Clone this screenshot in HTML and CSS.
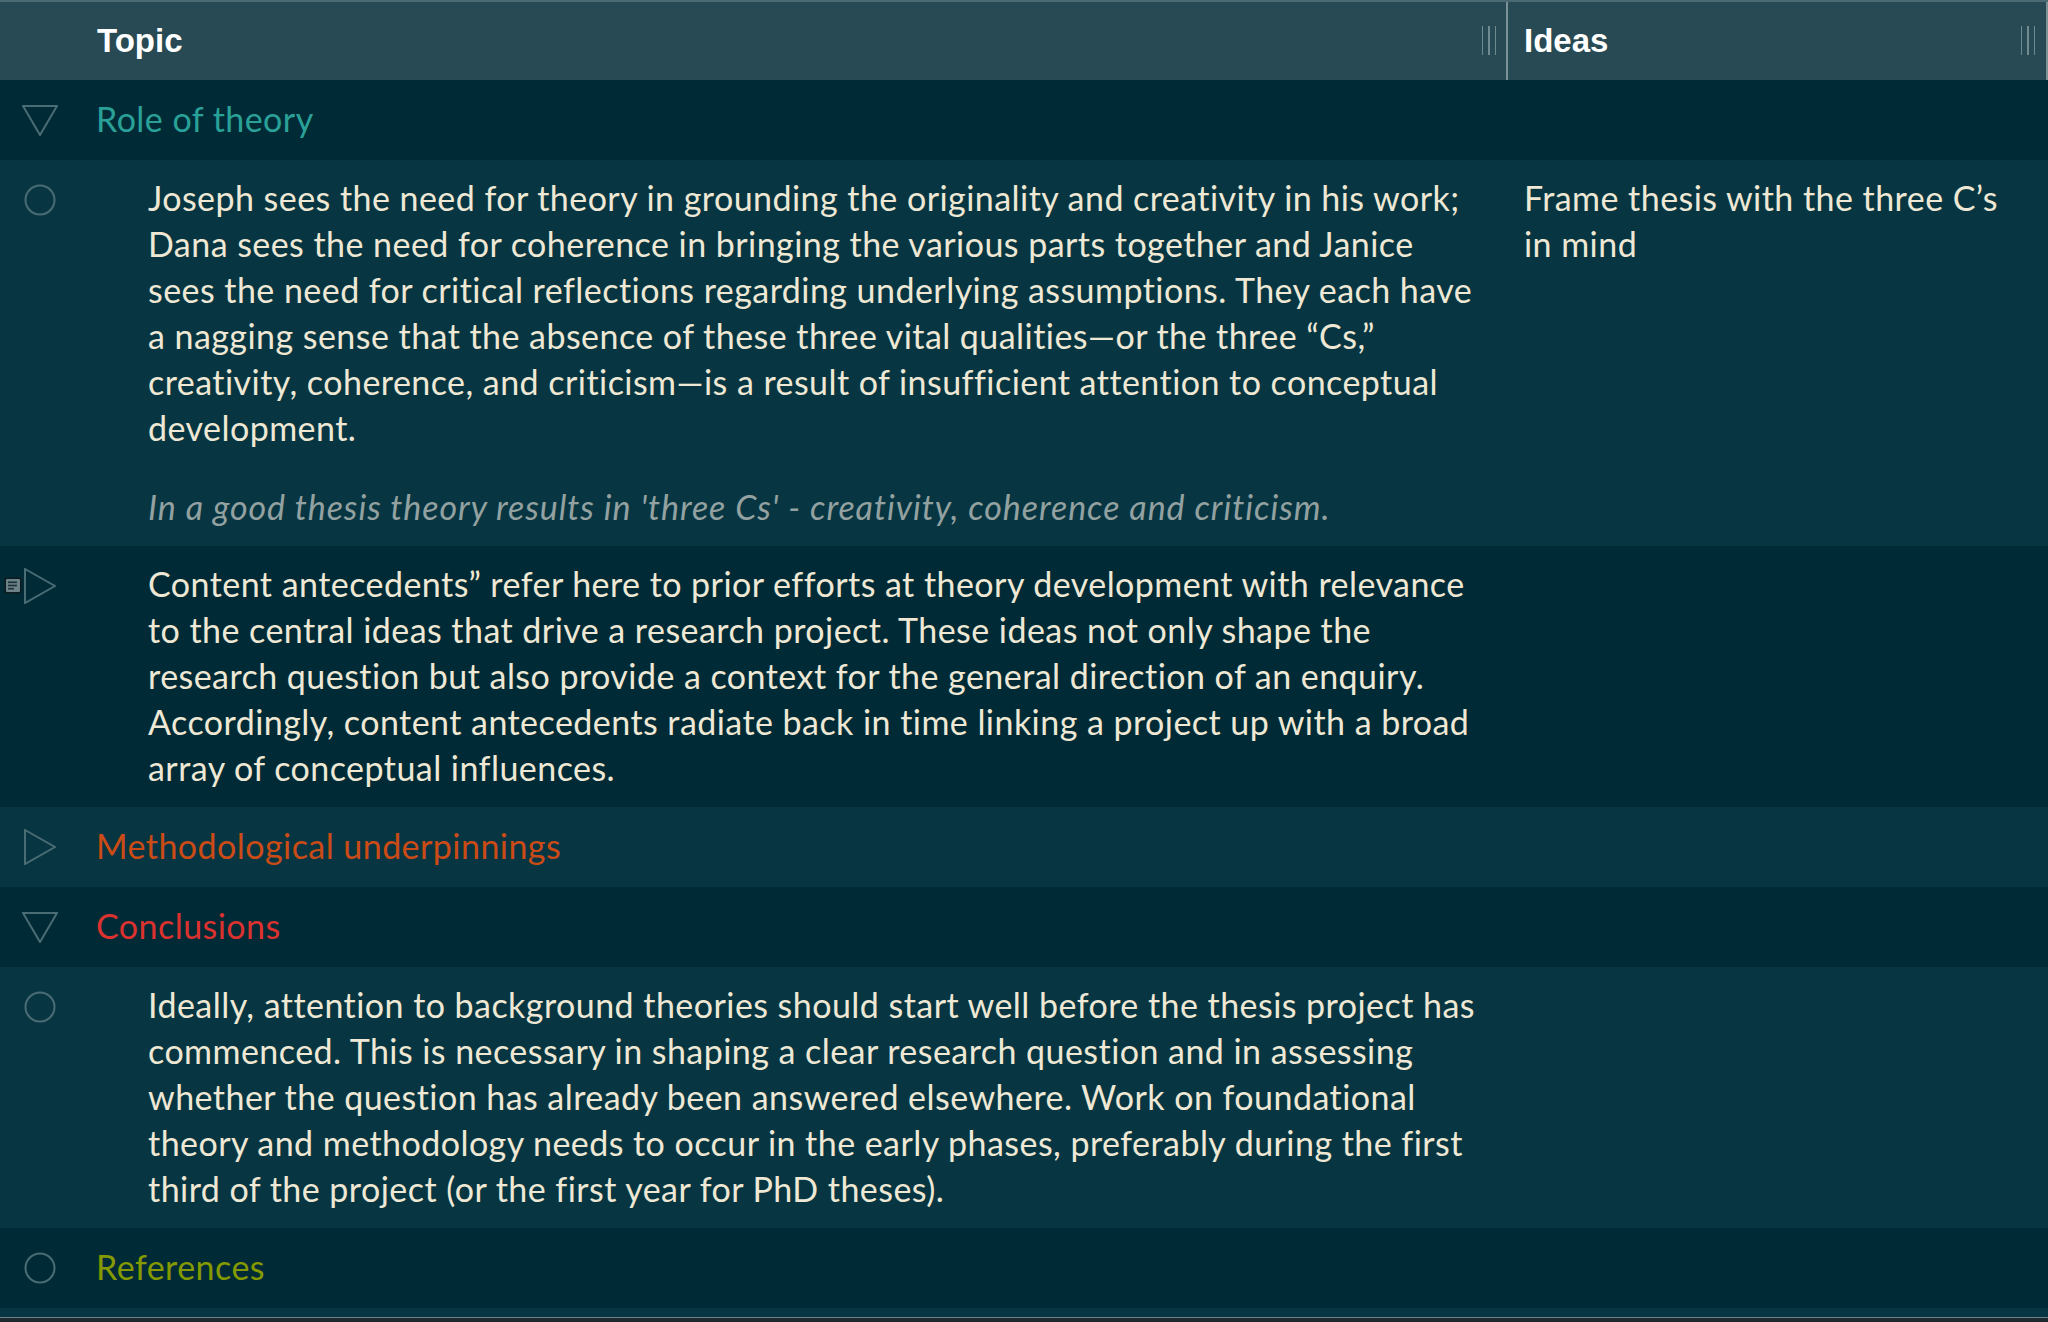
FILE: index.html
```html
<!DOCTYPE html>
<html lang="en">
<head>
<meta charset="utf-8">
<title>Outline</title>
<link rel="stylesheet" href="styles.css">
</head>
<body>
<div class="outline">
  <div class="header">
    <div class="hcell spacer"></div>
    <div class="hcell topic-h">
      <span class="htitle">Topic</span>
      <span class="grip"><i></i><i></i><i></i></span>
    </div>
    <div class="hcell ideas-h">
      <span class="htitle">Ideas</span>
      <span class="grip"><i></i><i></i><i></i></span>
    </div>
  </div>

  <div class="row title dark">
    <div class="icon"><svg class="tri-down" width="36" height="31" viewBox="0 0 36 31"><polygon points="1,1 35,1 18,30" /></svg></div>
    <div class="topic cyan">Role of theory</div>
    <div class="ideas"></div>
  </div>

  <div class="row note light">
    <div class="icon"><svg class="circle" width="32" height="32" viewBox="0 0 32 32"><circle cx="16" cy="16" r="14.5"/></svg></div>
    <div class="topic body">
      <p>Joseph sees the need for theory in grounding the originality and creativity in his work;<br>Dana sees the need for coherence in bringing the various parts together and Janice<br>sees the need for critical reflections regarding underlying assumptions. They each have<br>a nagging sense that the absence of these three vital qualities—or the three “Cs,”<br>creativity, coherence, and criticism—is a result of insufficient attention to conceptual<br>development.</p>
      <p class="annot">In a good thesis theory results in 'three Cs' - creativity, coherence and criticism.</p>
    </div>
    <div class="ideas body">Frame thesis with the three C’s<br>in mind</div>
  </div>

  <div class="row note dark">
    <div class="icon">
      <svg class="doc" width="18" height="17" viewBox="0 0 18 17"><rect x="0.5" y="0.5" width="17" height="16" rx="1.5" class="doc-bg"/><rect x="2" y="2" width="14" height="13" rx="1" class="doc-fill"/><rect x="4" y="4.5" width="9" height="1.6" class="doc-line"/><rect x="4" y="7.7" width="9" height="1.6" class="doc-line"/><rect x="4" y="10.9" width="6" height="1.6" class="doc-line"/></svg>
      <svg class="tri-right" width="32" height="36" viewBox="0 0 32 36"><polygon points="1,1 31,18 1,35" /></svg>
    </div>
    <div class="topic body">
      <p>Content antecedents” refer here to prior efforts at theory development with relevance<br>to the central ideas that drive a research project. These ideas not only shape the<br>research question but also provide a context for the general direction of an enquiry.<br>Accordingly, content antecedents radiate back in time linking a project up with a broad<br>array of conceptual influences.</p>
    </div>
    <div class="ideas"></div>
  </div>

  <div class="row title light">
    <div class="icon"><svg class="tri-right" width="32" height="36" viewBox="0 0 32 36"><polygon points="1,1 31,18 1,35" /></svg></div>
    <div class="topic orange">Methodological underpinnings</div>
    <div class="ideas"></div>
  </div>

  <div class="row title dark">
    <div class="icon"><svg class="tri-down" width="36" height="31" viewBox="0 0 36 31"><polygon points="1,1 35,1 18,30" /></svg></div>
    <div class="topic red">Conclusions</div>
    <div class="ideas"></div>
  </div>

  <div class="row note light">
    <div class="icon"><svg class="circle" width="32" height="32" viewBox="0 0 32 32"><circle cx="16" cy="16" r="14.5"/></svg></div>
    <div class="topic body">
      <p>Ideally, attention to background theories should start well before the thesis project has<br>commenced. This is necessary in shaping a clear research question and in assessing<br>whether the question has already been answered elsewhere. Work on foundational<br>theory and methodology needs to occur in the early phases, preferably during the first<br>third of the project (or the first year for PhD theses).</p>
    </div>
    <div class="ideas"></div>
  </div>

  <div class="row title dark">
    <div class="icon"><svg class="circle" width="32" height="32" viewBox="0 0 32 32"><circle cx="16" cy="16" r="14.5"/></svg></div>
    <div class="topic green">References</div>
    <div class="ideas"></div>
  </div>

  <div class="footer"></div>
</div>
</body>
</html>
```

FILE: styles.css
```css
html, body {
  margin: 0;
  padding: 0;
  background: #002b36;
}

.outline {
  width: 2048px;
  height: 1322px;
  overflow: hidden;
  font-family: "Lato", "Noto Sans", sans-serif;
  font-size: 34px;
  line-height: 46px;
  letter-spacing: 0.45px;
  color: #eee8d5;
  background: #1c2a2e;
}

.header,
.row {
  display: grid;
  grid-template-columns: 97px 1411px 540px;
}

.header {
  height: 80px;
  box-sizing: border-box;
  background: #274a54;
  border-top: 2px solid #4c6a72;
}

.hcell {
  display: flex;
  align-items: center;
  justify-content: space-between;
}

.htitle {
  font-family: "Liberation Sans", Arial, sans-serif;
  font-weight: bold;
  font-size: 33px;
  color: #ffffff;
  letter-spacing: 0;
}

.topic-h {
  border-right: 2px solid #7b9397;
  padding-right: 10px;
}

.ideas-h {
  padding-left: 16px;
  padding-right: 11px;
  border-right: 2px solid #7b9397;
}

.grip {
  display: flex;
  gap: 5px;
  height: 29px;
  margin-top: -2px;
}

.grip i {
  display: block;
  width: 1.5px;
  height: 29px;
  background: #6f8b91;
}

.dark { background: #002b36; }
.light { background: #073642; }

.title {
  height: 80px;
  align-items: center;
}

.title .topic {
  margin-left: -1px;
  margin-top: -2px;
}

.icon {
  padding-left: 22px;
  position: relative;
}

.note .icon {
  padding-top: 24px;
}

svg polygon,
svg circle {
  fill: none;
  stroke: #4a6c74;
  stroke-width: 2;
  stroke-linejoin: miter;
}

.icon svg { display: block; }

.circle { margin-left: 2px; }

.tri-right { margin-left: 2px; }

.note .tri-right { margin-top: -2px; }

.doc {
  position: absolute;
  left: 4px;
  top: 31px;
}

.doc-bg { fill: #0e1b1f; }
.doc-fill { fill: #6a8288; }
.doc-line { fill: #1d3137; }

.topic {
  white-space: nowrap;
}

.cyan { color: #2aa198; }
.orange { color: #cb4b16; }
.red { color: #dc322f; }
.green { color: #859900; }

.body p {
  margin: 0;
}

.note .topic {
  padding: 15px 0 16px 51px;
}

.note .ideas {
  padding: 15px 16px 16px 16px;
}

.annot {
  margin-top: 33px !important;
  font-style: italic;
  letter-spacing: 0.95px;
  color: #93a1a1;
}

.footer {
  height: 9px;
  background: #073642;
  border-bottom: 1px solid #6b8388;
}
```
